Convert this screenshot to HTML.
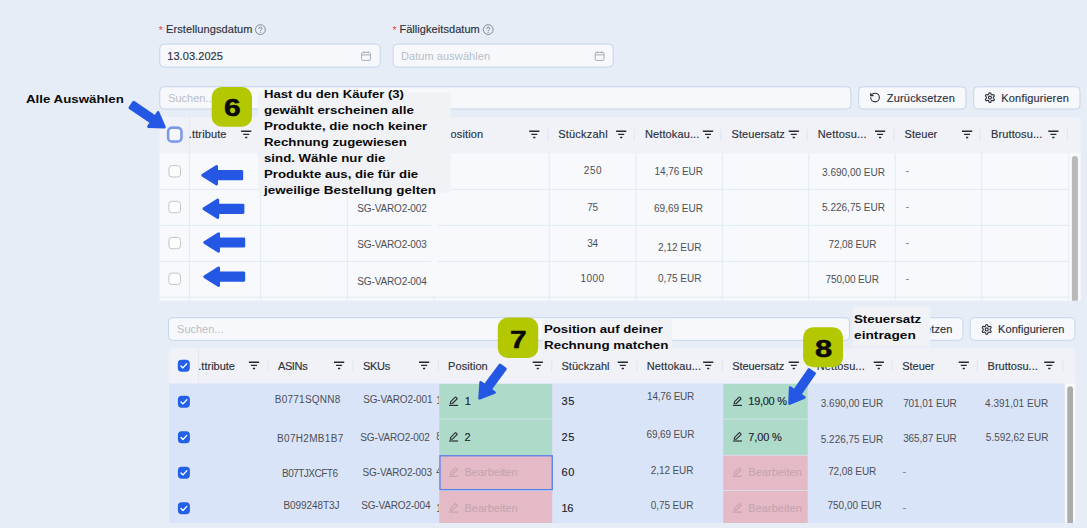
<!DOCTYPE html>
<html lang="de"><head><meta charset="utf-8"><title>Rechnung</title><style>
html,body{margin:0;padding:0;background:#e7edf6}
body{width:1087px;height:528px;background:#e7edf6;position:relative;overflow:hidden;font-family:"Liberation Sans",sans-serif}
body>svg,.t{position:absolute;left:0;top:0}
.t{white-space:nowrap;line-height:1;transform-origin:0 50%}
</style></head><body>
<svg width="1087" height="528" viewBox="0 0 1087 528">
<g transform="translate(254.40 23.60) scale(1.0000)"><circle cx="6" cy="6" r="4.9" fill="none" stroke="#7b818c" stroke-width="0.9"/><path d="M4.6 4.9a1.45 1.45 0 1 1 2.1 1.3c-.45.25-.7.5-.7 1" fill="none" stroke="#7b818c" stroke-width="0.9" stroke-linecap="round"/><circle cx="6" cy="8.6" r=".55" fill="#7b818c"/></g>
<rect x="159.80" y="44.10" width="220.40" height="22.90" rx="4.00" fill="#f6f8fc" stroke="#c6d6ea" stroke-width="1.0"/>
<g transform="translate(361.00 51.00) scale(1.0000)"><rect x=".6" y="1.4" width="8.8" height="8" rx="1" fill="none" stroke="#a7adb7" stroke-width="1"/><path d="M.6 3.9h8.8M2.9 .3v2M7.1 .3v2" stroke="#a7adb7" stroke-width="1" fill="none"/></g>
<g transform="translate(482.20 23.60) scale(1.0000)"><circle cx="6" cy="6" r="4.9" fill="none" stroke="#7b818c" stroke-width="0.9"/><path d="M4.6 4.9a1.45 1.45 0 1 1 2.1 1.3c-.45.25-.7.5-.7 1" fill="none" stroke="#7b818c" stroke-width="0.9" stroke-linecap="round"/><circle cx="6" cy="8.6" r=".55" fill="#7b818c"/></g>
<rect x="393.10" y="44.10" width="220.00" height="22.90" rx="4.00" fill="#f6f8fc" stroke="#c6d6ea" stroke-width="1.0"/>
<g transform="translate(594.60 51.00) scale(1.0000)"><rect x=".6" y="1.4" width="8.8" height="8" rx="1" fill="none" stroke="#a7adb7" stroke-width="1"/><path d="M.6 3.9h8.8M2.9 .3v2M7.1 .3v2" stroke="#a7adb7" stroke-width="1" fill="none"/></g>
<rect x="159.80" y="86.80" width="691.10" height="22.20" rx="4.00" fill="#f6f8fc" stroke="#c6d6ea" stroke-width="1.0"/>
<rect x="858.70" y="86.80" width="107.20" height="22.20" rx="4.00" fill="#f6f8fc" stroke="#c6d6ea" stroke-width="1.0"/>
<g transform="translate(869.29 91.79) scale(0.4800)"><path d="M3 12a9 9 0 1 0 9-9 9.750 9.750 0 0 0-6.740 2.740L3 8" fill="none" stroke="#2b303b" stroke-width="2.300" stroke-linecap="round" stroke-linejoin="round"/><path d="M3 3v5h5" fill="none" stroke="#2b303b" stroke-width="2.300" stroke-linecap="round" stroke-linejoin="round"/></g>
<rect x="973.70" y="86.80" width="106.30" height="22.20" rx="4.00" fill="#f6f8fc" stroke="#c6d6ea" stroke-width="1.0"/>
<g transform="translate(984.02 91.72) scale(0.4900)"><path d="M12.220 2h-.44a2 2 0 0 0-2 2v.18a2 2 0 0 1-1 1.730l-.43.25a2 2 0 0 1-2 0l-.15-.08a2 2 0 0 0-2.730.73l-.22.38a2 2 0 0 0 .73 2.730l.15.1a2 2 0 0 1 1 1.720v.51a2 2 0 0 1-1 1.740l-.15.09a2 2 0 0 0-.73 2.730l.22.38a2 2 0 0 0 2.730.73l.15-.08a2 2 0 0 1 2 0l.43.25a2 2 0 0 1 1 1.730V20a2 2 0 0 0 2 2h.44a2 2 0 0 0 2-2v-.18a2 2 0 0 1 1-1.730l.43-.25a2 2 0 0 1 2 0l.15.08a2 2 0 0 0 2.730-.73l.22-.39a2 2 0 0 0-.73-2.730l-.15-.08a2 2 0 0 1-1-1.740v-.5a2 2 0 0 1 1-1.740l.15-.09a2 2 0 0 0 .73-2.730l-.22-.38a2 2 0 0 0-2.730-.73l-.15.08a2 2 0 0 1-2 0l-.43-.25a2 2 0 0 1-1-1.730V4a2 2 0 0 0-2-2z" fill="none" stroke="#2b303b" stroke-width="2.300" stroke-linejoin="round"/><circle cx="12" cy="12" r="3" fill="none" stroke="#2b303b" stroke-width="2.300"/></g>
<path d="M163.5 117H1076.5A4.0 4.0 0 0 1 1080.5 121.0V153.4H159.5V121.0A4.0 4.0 0 0 1 163.5 117Z" fill="#f0f2f7"/>
<rect x="159.50" y="153.40" width="921.00" height="147.30" fill="#f7f9fc"/>
<rect x="159.50" y="188.90" width="921.00" height="1.00" fill="#e2ebf3"/>
<rect x="159.50" y="224.90" width="921.00" height="1.00" fill="#e2ebf3"/>
<rect x="159.50" y="260.90" width="921.00" height="1.00" fill="#e2ebf3"/>
<rect x="159.50" y="296.70" width="921.00" height="1.00" fill="#e2ebf3"/>
<rect x="188.90" y="153.40" width="1.00" height="147.30" fill="#e2ebf3"/>
<rect x="260.10" y="153.40" width="1.00" height="147.30" fill="#e2ebf3"/>
<rect x="346.90" y="153.40" width="1.00" height="147.30" fill="#e2ebf3"/>
<rect x="433.80" y="296.00" width="1.00" height="4.70" fill="#e2ebf3"/>
<rect x="548.80" y="153.40" width="1.00" height="147.30" fill="#e2ebf3"/>
<rect x="635.30" y="153.40" width="1.00" height="147.30" fill="#e2ebf3"/>
<rect x="721.80" y="153.40" width="1.00" height="147.30" fill="#e2ebf3"/>
<rect x="808.20" y="153.40" width="1.00" height="147.30" fill="#e2ebf3"/>
<rect x="894.80" y="153.40" width="1.00" height="147.30" fill="#e2ebf3"/>
<rect x="981.10" y="153.40" width="1.00" height="147.30" fill="#e2ebf3"/>
<rect x="1068.40" y="153.40" width="1.00" height="147.30" fill="#e2ebf3"/>
<rect x="431.00" y="190.00" width="7.00" height="106.00" fill="#f7f9fc"/>
<rect x="258.60" y="129.30" width="1.00" height="11.00" fill="#dde5ef"/>
<rect x="345.40" y="129.30" width="1.00" height="11.00" fill="#dde5ef"/>
<rect x="432.30" y="129.30" width="1.00" height="11.00" fill="#dde5ef"/>
<rect x="547.30" y="129.30" width="1.00" height="11.00" fill="#dde5ef"/>
<rect x="633.80" y="129.30" width="1.00" height="11.00" fill="#dde5ef"/>
<rect x="720.30" y="129.30" width="1.00" height="11.00" fill="#dde5ef"/>
<rect x="806.70" y="129.30" width="1.00" height="11.00" fill="#dde5ef"/>
<rect x="893.30" y="129.30" width="1.00" height="11.00" fill="#dde5ef"/>
<rect x="979.60" y="129.30" width="1.00" height="11.00" fill="#dde5ef"/>
<rect x="1066.90" y="129.30" width="1.00" height="11.00" fill="#dde5ef"/>
<rect x="188.90" y="117.00" width="1.00" height="36.40" fill="#e4e8ef"/>
<g transform="translate(241.00 130.60) scale(1.0000)"><path d="M.1 .7h10.200M2.200 3.800h6M4.100 6.900h2.200" stroke="#252932" stroke-width="1.4" fill="none"/></g>
<g transform="translate(529.10 130.60) scale(1.0000)"><path d="M.1 .7h10.200M2.200 3.800h6M4.100 6.900h2.200" stroke="#252932" stroke-width="1.4" fill="none"/></g>
<g transform="translate(616.00 130.60) scale(1.0000)"><path d="M.1 .7h10.200M2.200 3.800h6M4.100 6.900h2.200" stroke="#252932" stroke-width="1.4" fill="none"/></g>
<g transform="translate(702.80 130.60) scale(1.0000)"><path d="M.1 .7h10.200M2.200 3.800h6M4.100 6.900h2.200" stroke="#252932" stroke-width="1.4" fill="none"/></g>
<g transform="translate(788.60 130.60) scale(1.0000)"><path d="M.1 .7h10.200M2.200 3.800h6M4.100 6.900h2.200" stroke="#252932" stroke-width="1.4" fill="none"/></g>
<g transform="translate(874.90 130.60) scale(1.0000)"><path d="M.1 .7h10.200M2.200 3.800h6M4.100 6.900h2.200" stroke="#252932" stroke-width="1.4" fill="none"/></g>
<g transform="translate(961.90 130.60) scale(1.0000)"><path d="M.1 .7h10.200M2.200 3.800h6M4.100 6.900h2.200" stroke="#252932" stroke-width="1.4" fill="none"/></g>
<g transform="translate(1048.20 130.60) scale(1.0000)"><path d="M.1 .7h10.200M2.200 3.800h6M4.100 6.900h2.200" stroke="#252932" stroke-width="1.4" fill="none"/></g>
<rect x="166.40" y="126.00" width="16.80" height="17.30" rx="6.00" fill="#cfdaf5"/>
<rect x="168.20" y="127.80" width="13.20" height="13.70" rx="3.80" fill="#f6f7fa" stroke="#7b98e8" stroke-width="2.4"/>
<rect x="168.90" y="165.60" width="11.60" height="11.40" rx="3.00" fill="#fdfdfe" stroke="#c3c5c9" stroke-width="1.0"/>
<rect x="168.90" y="201.30" width="11.60" height="11.40" rx="3.00" fill="#fdfdfe" stroke="#c3c5c9" stroke-width="1.0"/>
<rect x="168.90" y="237.40" width="11.60" height="11.40" rx="3.00" fill="#fdfdfe" stroke="#c3c5c9" stroke-width="1.0"/>
<rect x="168.90" y="273.10" width="11.60" height="11.40" rx="3.00" fill="#fdfdfe" stroke="#c3c5c9" stroke-width="1.0"/>
<rect x="1069.50" y="153.90" width="11.00" height="146.80" fill="#f8f9fb"/>
<path d="M1074.9 155.9H1074.9A3.0 3.0 0 0 1 1077.9 158.9V300.7H1071.9V158.9A3.0 3.0 0 0 1 1074.9 155.9Z" fill="#b9b9b9"/>
<rect x="168.50" y="317.70" width="681.00" height="22.60" rx="4.00" fill="#f6f8fc" stroke="#c6d6ea" stroke-width="1.0"/>
<rect x="856.50" y="317.70" width="106.40" height="22.60" rx="4.00" fill="#f6f8fc" stroke="#c6d6ea" stroke-width="1.0"/>
<rect x="970.20" y="317.70" width="104.70" height="22.60" rx="4.00" fill="#f6f8fc" stroke="#c6d6ea" stroke-width="1.0"/>
<g transform="translate(980.82 323.52) scale(0.4900)"><path d="M12.220 2h-.44a2 2 0 0 0-2 2v.18a2 2 0 0 1-1 1.730l-.43.25a2 2 0 0 1-2 0l-.15-.08a2 2 0 0 0-2.730.73l-.22.38a2 2 0 0 0 .73 2.730l.15.1a2 2 0 0 1 1 1.720v.51a2 2 0 0 1-1 1.740l-.15.09a2 2 0 0 0-.73 2.730l.22.38a2 2 0 0 0 2.730.73l.15-.08a2 2 0 0 1 2 0l.43.25a2 2 0 0 1 1 1.730V20a2 2 0 0 0 2 2h.44a2 2 0 0 0 2-2v-.18a2 2 0 0 1 1-1.730l.43-.25a2 2 0 0 1 2 0l.15.08a2 2 0 0 0 2.730-.73l.22-.39a2 2 0 0 0-.73-2.730l-.15-.08a2 2 0 0 1-1-1.740v-.5a2 2 0 0 1 1-1.740l.15-.09a2 2 0 0 0 .73-2.730l-.22-.38a2 2 0 0 0-2.730-.73l-.15.08a2 2 0 0 1-2 0l-.43-.25a2 2 0 0 1-1-1.730V4a2 2 0 0 0-2-2z" fill="none" stroke="#2b303b" stroke-width="2.300" stroke-linejoin="round"/><circle cx="12" cy="12" r="3" fill="none" stroke="#2b303b" stroke-width="2.300"/></g>
<path d="M172.8 348.2H1071.4A4.0 4.0 0 0 1 1075.4 352.2V383.4H168.8V352.2A4.0 4.0 0 0 1 172.8 348.2Z" fill="#f0f2f7"/>
<rect x="168.80" y="383.40" width="906.60" height="139.60" fill="#f7f8fa"/>
<rect x="168.80" y="383.40" width="896.00" height="139.60" fill="#dae4f8"/>
<rect x="439.30" y="383.90" width="112.90" height="34.80" fill="#aedbc9"/>
<rect x="439.30" y="419.40" width="112.90" height="35.50" fill="#aedbc9"/>
<rect x="439.95" y="455.75" width="112.30" height="33.90" fill="#e4bac6" stroke="#557ee8" stroke-width="1.3"/>
<rect x="439.30" y="491.00" width="112.90" height="32.00" fill="#e4bac6"/>
<rect x="723.20" y="383.90" width="84.50" height="34.80" fill="#aedbc9"/>
<rect x="723.20" y="419.40" width="84.50" height="35.50" fill="#aedbc9"/>
<rect x="723.20" y="455.60" width="84.50" height="34.60" fill="#e4bac6"/>
<rect x="723.20" y="491.00" width="84.50" height="32.00" fill="#e4bac6"/>
<rect x="267.50" y="360.50" width="1.00" height="11.00" fill="#dfe4ec"/>
<rect x="352.50" y="360.50" width="1.00" height="11.00" fill="#dfe4ec"/>
<rect x="437.80" y="360.50" width="1.00" height="11.00" fill="#dfe4ec"/>
<rect x="551.30" y="360.50" width="1.00" height="11.00" fill="#dfe4ec"/>
<rect x="636.50" y="360.50" width="1.00" height="11.00" fill="#dfe4ec"/>
<rect x="721.80" y="360.50" width="1.00" height="11.00" fill="#dfe4ec"/>
<rect x="807.00" y="360.50" width="1.00" height="11.00" fill="#dfe4ec"/>
<rect x="891.50" y="360.50" width="1.00" height="11.00" fill="#dfe4ec"/>
<rect x="976.80" y="360.50" width="1.00" height="11.00" fill="#dfe4ec"/>
<rect x="1062.30" y="360.50" width="1.00" height="11.00" fill="#dfe4ec"/>
<rect x="198.00" y="348.20" width="1.00" height="35.20" fill="#e4e8ef"/>
<g transform="translate(248.80 361.60) scale(1.0000)"><path d="M.1 .7h10.200M2.200 3.800h6M4.100 6.900h2.200" stroke="#252932" stroke-width="1.4" fill="none"/></g>
<g transform="translate(333.90 361.60) scale(1.0000)"><path d="M.1 .7h10.200M2.200 3.800h6M4.100 6.900h2.200" stroke="#252932" stroke-width="1.4" fill="none"/></g>
<g transform="translate(418.90 361.60) scale(1.0000)"><path d="M.1 .7h10.200M2.200 3.800h6M4.100 6.900h2.200" stroke="#252932" stroke-width="1.4" fill="none"/></g>
<g transform="translate(532.60 361.60) scale(1.0000)"><path d="M.1 .7h10.200M2.200 3.800h6M4.100 6.900h2.200" stroke="#252932" stroke-width="1.4" fill="none"/></g>
<g transform="translate(617.60 361.60) scale(1.0000)"><path d="M.1 .7h10.200M2.200 3.800h6M4.100 6.900h2.200" stroke="#252932" stroke-width="1.4" fill="none"/></g>
<g transform="translate(703.00 361.60) scale(1.0000)"><path d="M.1 .7h10.200M2.200 3.800h6M4.100 6.900h2.200" stroke="#252932" stroke-width="1.4" fill="none"/></g>
<g transform="translate(788.60 361.60) scale(1.0000)"><path d="M.1 .7h10.200M2.200 3.800h6M4.100 6.900h2.200" stroke="#252932" stroke-width="1.4" fill="none"/></g>
<g transform="translate(873.60 361.60) scale(1.0000)"><path d="M.1 .7h10.200M2.200 3.800h6M4.100 6.900h2.200" stroke="#252932" stroke-width="1.4" fill="none"/></g>
<g transform="translate(958.60 361.60) scale(1.0000)"><path d="M.1 .7h10.200M2.200 3.800h6M4.100 6.900h2.200" stroke="#252932" stroke-width="1.4" fill="none"/></g>
<g transform="translate(1044.10 361.60) scale(1.0000)"><path d="M.1 .7h10.200M2.200 3.800h6M4.100 6.900h2.200" stroke="#252932" stroke-width="1.4" fill="none"/></g>
<g transform="translate(177.80 359.70) scale(1.0000)"><rect width="12" height="12" rx="3.700" fill="#2360e8"/><path d="M3.100 6.200l2 2 3.800-4.100" stroke="#fff" stroke-width="1.350" fill="none" stroke-linecap="round" stroke-linejoin="round"/></g>
<g transform="translate(177.90 395.70) scale(1.0000)"><rect width="12" height="12" rx="3.700" fill="#2360e8"/><path d="M3.100 6.200l2 2 3.800-4.100" stroke="#fff" stroke-width="1.350" fill="none" stroke-linecap="round" stroke-linejoin="round"/></g>
<g transform="translate(177.90 431.30) scale(1.0000)"><rect width="12" height="12" rx="3.700" fill="#2360e8"/><path d="M3.100 6.200l2 2 3.800-4.100" stroke="#fff" stroke-width="1.350" fill="none" stroke-linecap="round" stroke-linejoin="round"/></g>
<g transform="translate(177.90 466.70) scale(1.0000)"><rect width="12" height="12" rx="3.700" fill="#2360e8"/><path d="M3.100 6.200l2 2 3.800-4.100" stroke="#fff" stroke-width="1.350" fill="none" stroke-linecap="round" stroke-linejoin="round"/></g>
<g transform="translate(177.90 502.30) scale(1.0000)"><rect width="12" height="12" rx="3.700" fill="#2360e8"/><path d="M3.100 6.200l2 2 3.800-4.100" stroke="#fff" stroke-width="1.350" fill="none" stroke-linecap="round" stroke-linejoin="round"/></g>
<g transform="translate(449.00 405.40) scale(1.0000)"><path d="M0 0h9.100" stroke="#2b303b" stroke-width="1.2" fill="none"/><path d="M1.300 -1.700L1.700 -3.700L6.200 -8.200a.5 .5 0 0 1 .7 0L8 -7.100a.5 .5 0 0 1 0 .7L3.400 -1.900Z" stroke="#2b303b" stroke-width="1.15" fill="none" stroke-linejoin="round"/></g>
<g transform="translate(449.00 441.00) scale(1.0000)"><path d="M0 0h9.100" stroke="#2b303b" stroke-width="1.2" fill="none"/><path d="M1.300 -1.700L1.700 -3.700L6.200 -8.200a.5 .5 0 0 1 .7 0L8 -7.100a.5 .5 0 0 1 0 .7L3.400 -1.900Z" stroke="#2b303b" stroke-width="1.15" fill="none" stroke-linejoin="round"/></g>
<g transform="translate(449.00 476.40) scale(1.0000)"><path d="M0 0h9.100" stroke="#c9a2af" stroke-width="1.2" fill="none"/><path d="M1.300 -1.700L1.700 -3.700L6.200 -8.200a.5 .5 0 0 1 .7 0L8 -7.100a.5 .5 0 0 1 0 .7L3.400 -1.900Z" stroke="#c9a2af" stroke-width="1.15" fill="none" stroke-linejoin="round"/></g>
<g transform="translate(449.00 512.10) scale(1.0000)"><path d="M0 0h9.100" stroke="#c9a2af" stroke-width="1.2" fill="none"/><path d="M1.300 -1.700L1.700 -3.700L6.200 -8.200a.5 .5 0 0 1 .7 0L8 -7.100a.5 .5 0 0 1 0 .7L3.400 -1.900Z" stroke="#c9a2af" stroke-width="1.15" fill="none" stroke-linejoin="round"/></g>
<g transform="translate(732.90 405.40) scale(1.0000)"><path d="M0 0h9.100" stroke="#2b303b" stroke-width="1.2" fill="none"/><path d="M1.300 -1.700L1.700 -3.700L6.200 -8.200a.5 .5 0 0 1 .7 0L8 -7.100a.5 .5 0 0 1 0 .7L3.400 -1.900Z" stroke="#2b303b" stroke-width="1.15" fill="none" stroke-linejoin="round"/></g>
<g transform="translate(732.90 441.00) scale(1.0000)"><path d="M0 0h9.100" stroke="#2b303b" stroke-width="1.2" fill="none"/><path d="M1.300 -1.700L1.700 -3.700L6.200 -8.200a.5 .5 0 0 1 .7 0L8 -7.100a.5 .5 0 0 1 0 .7L3.400 -1.900Z" stroke="#2b303b" stroke-width="1.15" fill="none" stroke-linejoin="round"/></g>
<g transform="translate(732.90 476.40) scale(1.0000)"><path d="M0 0h9.100" stroke="#c9a2af" stroke-width="1.2" fill="none"/><path d="M1.300 -1.700L1.700 -3.700L6.200 -8.200a.5 .5 0 0 1 .7 0L8 -7.100a.5 .5 0 0 1 0 .7L3.400 -1.900Z" stroke="#c9a2af" stroke-width="1.15" fill="none" stroke-linejoin="round"/></g>
<g transform="translate(732.90 512.10) scale(1.0000)"><path d="M0 0h9.100" stroke="#c9a2af" stroke-width="1.2" fill="none"/><path d="M1.300 -1.700L1.700 -3.700L6.200 -8.200a.5 .5 0 0 1 .7 0L8 -7.100a.5 .5 0 0 1 0 .7L3.400 -1.900Z" stroke="#c9a2af" stroke-width="1.15" fill="none" stroke-linejoin="round"/></g>
<path d="M1070.3 386.2H1070.0A3.0 3.0 0 0 1 1073 389.2V523.0H1067.3V389.2A3.0 3.0 0 0 1 1070.3 386.2Z" fill="#ababab"/>
</svg>
<span class="t" style="left:158.83px;top:24.79px;font-size:10.5px;color:#e5484d;">*</span>
<span class="t" style="letter-spacing:0.099px;left:166.00px;top:23.54px;font-size:11px;color:#2b303b;-webkit-text-stroke:0.15px #2b303b;">Erstellungsdatum</span>
<span class="t" style="letter-spacing:0.070px;left:167.20px;top:50.54px;font-size:11px;color:#2b303b;-webkit-text-stroke:0.15px #2b303b;">13.03.2025</span>
<span class="t" style="left:392.43px;top:24.79px;font-size:10.5px;color:#e5484d;">*</span>
<span class="t" style="letter-spacing:0.060px;left:399.40px;top:23.54px;font-size:11px;color:#2b303b;-webkit-text-stroke:0.15px #2b303b;">Fälligkeitsdatum</span>
<span class="t" style="letter-spacing:0.088px;left:400.90px;top:50.54px;font-size:11px;color:#b9bec8;">Datum auswählen</span>
<span class="t" style="letter-spacing:-0.024px;left:168.20px;top:92.54px;font-size:11px;color:#b9bec8;">Suchen...</span>
<span class="t" style="letter-spacing:0.178px;left:886.80px;top:92.54px;font-size:11px;color:#2b303b;-webkit-text-stroke:0.15px #2b303b;">Zurücksetzen</span>
<span class="t" style="letter-spacing:0.179px;left:1001.30px;top:92.54px;font-size:11px;color:#2b303b;-webkit-text-stroke:0.15px #2b303b;">Konfigurieren</span>
<span class="t" style="letter-spacing:0.125px;left:188.81px;top:128.54px;font-size:11px;color:#2b303b;-webkit-text-stroke:0.15px #2b303b;">.ttribute</span>
<span class="t" style="letter-spacing:0.132px;left:450.50px;top:128.54px;font-size:11px;color:#2b303b;-webkit-text-stroke:0.15px #2b303b;">osition</span>
<span class="t" style="letter-spacing:0.211px;left:558.21px;top:128.54px;font-size:11px;color:#2b303b;-webkit-text-stroke:0.15px #2b303b;">Stückzahl</span>
<span class="t" style="letter-spacing:0.109px;left:645.00px;top:128.54px;font-size:11px;color:#2b303b;-webkit-text-stroke:0.15px #2b303b;">Nettokau...</span>
<span class="t" style="letter-spacing:0.077px;left:731.50px;top:128.54px;font-size:11px;color:#2b303b;-webkit-text-stroke:0.15px #2b303b;">Steuersatz</span>
<span class="t" style="letter-spacing:0.190px;left:817.71px;top:128.54px;font-size:11px;color:#2b303b;-webkit-text-stroke:0.15px #2b303b;">Nettosu...</span>
<span class="t" style="letter-spacing:0.074px;left:904.50px;top:128.54px;font-size:11px;color:#2b303b;-webkit-text-stroke:0.15px #2b303b;">Steuer</span>
<span class="t" style="letter-spacing:0.105px;left:991.11px;top:128.54px;font-size:11px;color:#2b303b;-webkit-text-stroke:0.15px #2b303b;">Bruttosu...</span>
<span class="t" style="letter-spacing:-0.141px;left:357.35px;top:203.54px;font-size:10px;color:#4d4f55;">SG-VARO2-002</span>
<span class="t" style="letter-spacing:-0.141px;left:357.35px;top:239.54px;font-size:10px;color:#4d4f55;">SG-VARO2-003</span>
<span class="t" style="letter-spacing:-0.141px;left:357.35px;top:276.54px;font-size:10px;color:#4d4f55;">SG-VARO2-004</span>
<span class="t" style="letter-spacing:0.606px;left:583.75px;top:165.54px;font-size:10px;color:#4d4f55;">250</span>
<span class="t" style="letter-spacing:-0.225px;left:587.15px;top:202.54px;font-size:10px;color:#4d4f55;">75</span>
<span class="t" style="letter-spacing:-0.225px;left:587.15px;top:238.54px;font-size:10px;color:#4d4f55;">34</span>
<span class="t" style="letter-spacing:0.383px;left:580.55px;top:273.54px;font-size:10px;color:#4d4f55;">1000</span>
<span class="t" style="letter-spacing:-0.065px;left:654.55px;top:166.54px;font-size:10px;color:#4d4f55;">14,76 EUR</span>
<span class="t" style="letter-spacing:-0.003px;left:654.05px;top:203.54px;font-size:10px;color:#4d4f55;">69,69 EUR</span>
<span class="t" style="letter-spacing:0.006px;left:658.05px;top:242.54px;font-size:10px;color:#4d4f55;">2,12 EUR</span>
<span class="t" style="letter-spacing:0.006px;left:658.05px;top:273.54px;font-size:10px;color:#4d4f55;">0,75 EUR</span>
<span class="t" style="letter-spacing:0.007px;left:822.05px;top:167.54px;font-size:10px;color:#4d4f55;">3.690,00 EUR</span>
<span class="t" style="letter-spacing:0.007px;left:822.05px;top:202.54px;font-size:10px;color:#4d4f55;">5.226,75 EUR</span>
<span class="t" style="letter-spacing:-0.128px;left:828.55px;top:239.54px;font-size:10px;color:#4d4f55;">72,08 EUR</span>
<span class="t" style="letter-spacing:-0.120px;left:825.55px;top:274.54px;font-size:10px;color:#4d4f55;">750,00 EUR</span>
<span class="t" style="left:905.49px;top:165.39px;font-size:11.3px;color:#7b7f88;">-</span>
<span class="t" style="left:905.49px;top:201.39px;font-size:11.3px;color:#7b7f88;">-</span>
<span class="t" style="left:905.49px;top:237.39px;font-size:11.3px;color:#7b7f88;">-</span>
<span class="t" style="left:905.49px;top:273.39px;font-size:11.3px;color:#7b7f88;">-</span>
<span class="t" style="letter-spacing:-0.012px;left:177.10px;top:323.54px;font-size:11px;color:#b9bec8;">Suchen...</span>
<span class="t" style="letter-spacing:0.069px;left:885.50px;top:323.54px;font-size:11px;color:#2b303b;-webkit-text-stroke:0.15px #2b303b;">Zurücksetzen</span>
<span class="t" style="letter-spacing:0.063px;left:998.11px;top:323.54px;font-size:11px;color:#2b303b;-webkit-text-stroke:0.15px #2b303b;">Konfigurieren</span>
<span class="t" style="letter-spacing:0.000px;left:198.31px;top:360.54px;font-size:11px;color:#2b303b;-webkit-text-stroke:0.15px #2b303b;">.ttribute</span>
<span class="t" style="letter-spacing:-0.349px;left:277.90px;top:360.54px;font-size:11px;color:#2b303b;-webkit-text-stroke:0.15px #2b303b;">ASINs</span>
<span class="t" style="letter-spacing:-0.278px;left:362.90px;top:360.54px;font-size:11px;color:#2b303b;-webkit-text-stroke:0.15px #2b303b;">SKUs</span>
<span class="t" style="letter-spacing:0.064px;left:448.11px;top:360.54px;font-size:11px;color:#2b303b;-webkit-text-stroke:0.15px #2b303b;">Position</span>
<span class="t" style="letter-spacing:0.036px;left:561.50px;top:360.54px;font-size:11px;color:#2b303b;-webkit-text-stroke:0.15px #2b303b;">Stückzahl</span>
<span class="t" style="letter-spacing:0.109px;left:646.80px;top:360.54px;font-size:11px;color:#2b303b;-webkit-text-stroke:0.15px #2b303b;">Nettokau...</span>
<span class="t" style="letter-spacing:-0.056px;left:732.21px;top:360.54px;font-size:11px;color:#2b303b;-webkit-text-stroke:0.15px #2b303b;">Steuersatz</span>
<span class="t" style="letter-spacing:0.090px;left:816.80px;top:360.54px;font-size:11px;color:#2b303b;-webkit-text-stroke:0.15px #2b303b;">Nettosu...</span>
<span class="t" style="letter-spacing:-0.046px;left:902.30px;top:360.54px;font-size:11px;color:#2b303b;-webkit-text-stroke:0.15px #2b303b;">Steuer</span>
<span class="t" style="letter-spacing:0.005px;left:987.61px;top:360.54px;font-size:11px;color:#2b303b;-webkit-text-stroke:0.15px #2b303b;">Bruttosu...</span>
<span class="t" style="letter-spacing:0.247px;left:274.75px;top:394.54px;font-size:10px;color:#4d4f55;">B0771SQNN8</span>
<span class="t" style="letter-spacing:0.314px;left:277.05px;top:433.54px;font-size:10px;color:#4d4f55;">B07H2MB1B7</span>
<span class="t" style="letter-spacing:-0.520px;left:282.05px;top:468.54px;font-size:10px;color:#4d4f55;">B07TJXCFT6</span>
<span class="t" style="letter-spacing:-0.080px;left:283.45px;top:500.54px;font-size:10px;color:#4d4f55;">B099248T3J</span>
<span class="t" style="letter-spacing:-0.150px;left:363.15px;top:394.54px;font-size:10px;color:#4d4f55;">SG-VARO2-001</span>
<span class="t" style="letter-spacing:-0.132px;left:360.25px;top:432.54px;font-size:10px;color:#4d4f55;">SG-VARO2-002</span>
<span class="t" style="letter-spacing:-0.141px;left:362.55px;top:467.54px;font-size:10px;color:#4d4f55;">SG-VARO2-003</span>
<span class="t" style="letter-spacing:-0.150px;left:361.15px;top:500.54px;font-size:10px;color:#4d4f55;">SG-VARO2-004</span>
<span class="t" style="left:436.2px;top:395.8px;font-size:10px;color:#4d4f55;width:3px;overflow:hidden">1</span>
<span class="t" style="left:436.2px;top:432.3px;font-size:10px;color:#4d4f55;width:3px;overflow:hidden">8</span>
<span class="t" style="left:436.2px;top:467.3px;font-size:10px;color:#4d4f55;width:3px;overflow:hidden">4</span>
<span class="t" style="left:436.2px;top:503.8px;font-size:10px;color:#4d4f55;width:3px;overflow:hidden">1</span>
<span class="t" style="left:464.81px;top:395.54px;font-size:11px;color:#20242e;-webkit-text-stroke:0.15px #20242e;">1</span>
<span class="t" style="left:464.50px;top:431.54px;font-size:11px;color:#20242e;-webkit-text-stroke:0.15px #20242e;">2</span>
<span class="t" style="letter-spacing:-0.014px;left:464.50px;top:466.54px;font-size:11px;color:#c2a3af;">Bearbeiten</span>
<span class="t" style="letter-spacing:-0.014px;left:464.50px;top:502.54px;font-size:11px;color:#c2a3af;">Bearbeiten</span>
<span class="t" style="letter-spacing:0.640px;left:561.50px;top:395.54px;font-size:11px;color:#20242e;-webkit-text-stroke:0.15px #20242e;">35</span>
<span class="t" style="letter-spacing:0.640px;left:561.50px;top:431.54px;font-size:11px;color:#20242e;-webkit-text-stroke:0.15px #20242e;">25</span>
<span class="t" style="letter-spacing:0.640px;left:561.50px;top:466.54px;font-size:11px;color:#20242e;-webkit-text-stroke:0.15px #20242e;">60</span>
<span class="t" style="letter-spacing:-0.460px;left:561.50px;top:502.54px;font-size:11px;color:#20242e;-webkit-text-stroke:0.15px #20242e;">16</span>
<span class="t" style="letter-spacing:-0.203px;left:647.05px;top:391.54px;font-size:10px;color:#4d4f55;">14,76 EUR</span>
<span class="t" style="letter-spacing:-0.128px;left:646.55px;top:429.54px;font-size:10px;color:#4d4f55;">69,69 EUR</span>
<span class="t" style="letter-spacing:-0.108px;left:650.85px;top:465.54px;font-size:10px;color:#4d4f55;">2,12 EUR</span>
<span class="t" style="letter-spacing:-0.108px;left:650.85px;top:500.54px;font-size:10px;color:#4d4f55;">0,75 EUR</span>
<span class="t" style="letter-spacing:-0.281px;left:748.30px;top:395.54px;font-size:11px;color:#20242e;-webkit-text-stroke:0.15px #20242e;">19,00 %</span>
<span class="t" style="letter-spacing:-0.152px;left:748.30px;top:431.54px;font-size:11px;color:#20242e;-webkit-text-stroke:0.15px #20242e;">7,00 %</span>
<span class="t" style="letter-spacing:0.030px;left:748.30px;top:466.54px;font-size:11px;color:#c2a3af;">Bearbeiten</span>
<span class="t" style="letter-spacing:0.030px;left:748.30px;top:502.54px;font-size:11px;color:#c2a3af;">Bearbeiten</span>
<span class="t" style="letter-spacing:-0.039px;left:820.85px;top:398.54px;font-size:10px;color:#4d4f55;">3.690,00 EUR</span>
<span class="t" style="letter-spacing:-0.039px;left:820.85px;top:434.54px;font-size:10px;color:#4d4f55;">5.226,75 EUR</span>
<span class="t" style="letter-spacing:-0.103px;left:828.15px;top:466.54px;font-size:10px;color:#4d4f55;">72,08 EUR</span>
<span class="t" style="letter-spacing:-0.032px;left:827.55px;top:500.54px;font-size:10px;color:#4d4f55;">750,00 EUR</span>
<span class="t" style="letter-spacing:-0.087px;left:903.15px;top:398.54px;font-size:10px;color:#4d4f55;">701,01 EUR</span>
<span class="t" style="letter-spacing:-0.087px;left:903.15px;top:433.54px;font-size:10px;color:#4d4f55;">365,87 EUR</span>
<span class="t" style="left:902.49px;top:466.39px;font-size:11.3px;color:#7b7f88;">-</span>
<span class="t" style="left:902.49px;top:502.39px;font-size:11.3px;color:#7b7f88;">-</span>
<span class="t" style="letter-spacing:0.025px;left:985.05px;top:398.54px;font-size:10px;color:#4d4f55;">4.391,01 EUR</span>
<span class="t" style="letter-spacing:-0.021px;left:985.85px;top:432.54px;font-size:10px;color:#4d4f55;">5.592,62 EUR</span>
<svg width="1087" height="528" viewBox="0 0 1087 528">
<g transform="translate(131.3 104.6) rotate(34.31)"><path d="M0.60 -3.40 L26.60 -3.40 L26.60 -8.56 L40.04 0 L26.60 8.56 L26.60 3.40 L0.60 3.40 Z" fill="#2457e3" stroke="#2457e3" stroke-width="2.8" stroke-linejoin="round"/></g>
<rect x="258.00" y="92.80" width="193.00" height="99.90" fill="#f1f2f6"/>
<rect x="211.70" y="87.00" width="40.30" height="39.70" rx="10.00" fill="#b3c800"/>
<g transform="translate(200.30 163.20) scale(1.0000)"><path d="M2.400 12 L16.300 3.200 L16.300 8.300 L41.500 8.300 L41.500 15.700 L16.300 15.700 L16.300 20.800 Z" fill="#2457e3" stroke="#2457e3" stroke-width="2.800" stroke-linejoin="round"/></g>
<g transform="translate(201.50 196.80) scale(1.0000)"><path d="M2.400 12 L16.300 3.200 L16.300 8.300 L41.500 8.300 L41.500 15.700 L16.300 15.700 L16.300 20.800 Z" fill="#2457e3" stroke="#2457e3" stroke-width="2.800" stroke-linejoin="round"/></g>
<g transform="translate(202.30 230.50) scale(1.0000)"><path d="M2.400 12 L16.300 3.200 L16.300 8.300 L41.500 8.300 L41.500 15.700 L16.300 15.700 L16.300 20.800 Z" fill="#2457e3" stroke="#2457e3" stroke-width="2.800" stroke-linejoin="round"/></g>
<g transform="translate(202.30 264.70) scale(1.0000)"><path d="M2.400 12 L16.300 3.200 L16.300 8.300 L41.500 8.300 L41.500 15.700 L16.300 15.700 L16.300 20.800 Z" fill="#2457e3" stroke="#2457e3" stroke-width="2.800" stroke-linejoin="round"/></g>
<rect x="542.60" y="319.30" width="129.70" height="32.20" fill="#f1f2f6"/>
<rect x="497.80" y="317.50" width="40.40" height="40.50" rx="10.00" fill="#b3c800"/>
<g transform="translate(503 366.5) rotate(126.28)"><path d="M0.60 -3.40 L26.00 -3.40 L26.00 -8.56 L39.44 0 L26.00 8.56 L26.00 3.40 L0.60 3.40 Z" fill="#2457e3" stroke="#2457e3" stroke-width="2.8" stroke-linejoin="round"/></g>
<rect x="853.40" y="306.60" width="76.80" height="39.90" fill="#f1f2f6"/>
<rect x="803.10" y="327.20" width="39.90" height="40.00" rx="10.00" fill="#b3c800"/>
<g transform="translate(812.1 371) rotate(124.59)"><path d="M0.60 -3.40 L26.13 -3.40 L26.13 -8.56 L39.57 0 L26.13 8.56 L26.13 3.40 L0.60 3.40 Z" fill="#2457e3" stroke="#2457e3" stroke-width="2.8" stroke-linejoin="round"/></g>
</svg>
<span class="t" style="transform:scaleX(1.1269);left:25.70px;top:94.14px;font-size:11.8px;color:#0a0a0a;font-weight:700;">Alle Auswählen</span>
<span class="t" style="transform:scaleX(1.1121);left:264.00px;top:89.14px;font-size:11.8px;color:#0a0a0a;font-weight:700;">Hast du den Käufer (3)</span>
<span class="t" style="transform:scaleX(1.1314);left:264.00px;top:105.14px;font-size:11.8px;color:#0a0a0a;font-weight:700;">gewählt erscheinen alle</span>
<span class="t" style="transform:scaleX(1.1320);left:264.00px;top:121.14px;font-size:11.8px;color:#0a0a0a;font-weight:700;">Produkte, die noch keiner</span>
<span class="t" style="transform:scaleX(1.1226);left:264.00px;top:137.14px;font-size:11.8px;color:#0a0a0a;font-weight:700;">Rechnung zugewiesen</span>
<span class="t" style="transform:scaleX(1.1221);left:264.00px;top:153.14px;font-size:11.8px;color:#0a0a0a;font-weight:700;">sind. Wähle nur die</span>
<span class="t" style="transform:scaleX(1.1198);left:264.00px;top:169.14px;font-size:11.8px;color:#0a0a0a;font-weight:700;">Produkte aus, die für die</span>
<span class="t" style="transform:scaleX(1.1398);left:264.00px;top:185.14px;font-size:11.8px;color:#0a0a0a;font-weight:700;">jeweilige Bestellung gelten</span>
<span class="t" style="transform:scaleX(1.2471);left:224.20px;top:95.54px;font-size:24px;color:#0a0a0a;font-weight:700;-webkit-text-stroke:0.5px #0a0a0a;">6</span>
<span class="t" style="transform:scaleX(1.1194);left:543.60px;top:324.14px;font-size:11.8px;color:#0a0a0a;font-weight:700;">Position auf deiner</span>
<span class="t" style="transform:scaleX(1.1370);left:543.60px;top:340.14px;font-size:11.8px;color:#0a0a0a;font-weight:700;">Rechnung matchen</span>
<span class="t" style="transform:scaleX(1.2173);left:509.80px;top:328.29px;font-size:24.5px;color:#0a0a0a;font-weight:700;-webkit-text-stroke:0.5px #0a0a0a;">7</span>
<span class="t" style="transform:scaleX(1.1272);left:854.30px;top:314.14px;font-size:11.8px;color:#0a0a0a;font-weight:700;">Steuersatz</span>
<span class="t" style="transform:scaleX(1.1648);left:854.30px;top:330.14px;font-size:11.8px;color:#0a0a0a;font-weight:700;">eintragen</span>
<span class="t" style="transform:scaleX(1.2613);left:815.40px;top:337.29px;font-size:24.5px;color:#0a0a0a;font-weight:700;-webkit-text-stroke:0.5px #0a0a0a;">8</span>
</body></html>
